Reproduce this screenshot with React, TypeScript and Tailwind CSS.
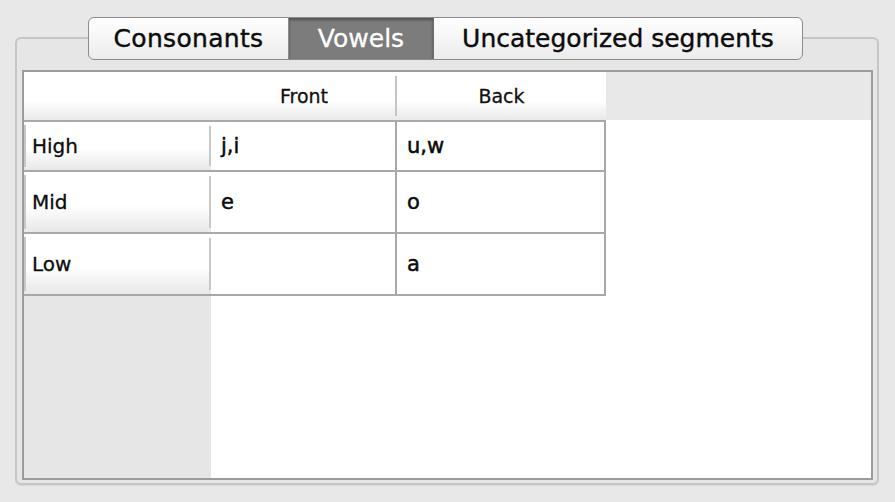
import React from "react";

const rows = [
  { label: "High", front: "j,i", back: "u,w", h: "h-[50px]" },
  { label: "Mid", front: "e", back: "o", h: "h-[62px]" },
  { label: "Low", front: "", back: "a", h: "h-[62px]" },
];

const font = { fontFamily: '"DejaVu Sans", "Liberation Sans", sans-serif' };

export default function App() {
  return (
    <div className="w-[895px] h-[502px] bg-[#e8e8e8] pt-[37px] pl-[15px]" style={font}>
      {/* tab panel */}
      <div className="relative w-[864px] h-[448px] border-2 border-[#c6c6c6] rounded-[6px] bg-[#e6e6e6] shadow-[0_1px_0_#d8d8d8] pt-[31px] px-[5px]">
        {/* segmented tabs */}
        <div className="absolute left-[71px] top-[-22px] flex h-[43px] rounded-[6px] border border-[#8c8c8c] overflow-hidden bg-gradient-to-b from-white to-[#ececec] text-[25px] text-[#0c0c0c] [-webkit-text-stroke:0.4px_#0c0c0c]">
          <div className="w-[200px] flex items-center justify-center border-r border-[#8c8c8c] tracking-[0.3px]">Consonants</div>
          <div className="w-[145px] flex items-center justify-center bg-[#7c7c7c] text-white [-webkit-text-stroke:0.3px_white] shadow-[inset_0_2px_3px_rgba(0,0,0,0.35)] border-r border-[#6a6a6a]">
            Vowels
          </div>
          <div className="w-[368px] flex items-center justify-center">Uncategorized segments</div>
        </div>

        {/* table view */}
        <div className="w-[851px] h-[410px] border-2 border-[#9c9c9c] bg-white flex flex-col">
          {/* column headers */}
          <div className="flex h-[48px] shrink-0">
            <div className="w-[582px] flex bg-gradient-to-b from-white from-60% to-[#e9e9e9] text-[19px] text-[#111] [-webkit-text-stroke:0.3px_#111]">
              <div className="w-[187px]" />
              <div className="w-[186px] flex items-center justify-center relative">
                Front
                <div className="absolute right-0 top-[4px] bottom-[4px] w-[2px] bg-[#c4c4c4]" />
              </div>
              <div className="w-[209px] flex items-center justify-center">Back</div>
            </div>
            <div className="flex-1 bg-[#e8e8e8]" />
          </div>

          {/* rows */}
          <div className="flex shrink-0">
            <div className="w-[582px] border-t-2 border-[#a8a8a8]">
              {rows.map((r) => (
                <div key={r.label} className={`flex ${r.h} border-b-2 border-[#a8a8a8]`}>
                  <div className="w-[187px] relative flex items-center pl-[8px] bg-gradient-to-b from-white from-55% to-[#e8e8e8] text-[20px] text-[#0c0c0c] [-webkit-text-stroke:0.3px_#0c0c0c]">
                    <div className="absolute left-0 top-[3px] bottom-[3px] w-[2px] bg-[#c8c8c8]" />
                    {r.label}
                    <div className="absolute right-0 top-[4px] bottom-[4px] w-[2px] bg-[#c8c8c8]" />
                  </div>
                  <div className="w-[186px] flex items-center pl-[10px] pt-[2px] text-[21px] text-[#0c0c0c] [-webkit-text-stroke:0.5px_#0c0c0c] border-r-2 border-[#a8a8a8]">
                    {r.front}
                  </div>
                  <div className="w-[209px] flex items-center pl-[10px] pt-[2px] text-[21px] text-[#0c0c0c] [-webkit-text-stroke:0.5px_#0c0c0c] border-r-2 border-[#a8a8a8]">
                    {r.back}
                  </div>
                </div>
              ))}
            </div>
            <div className="flex-1" />
          </div>

          {/* empty area */}
          <div className="flex flex-1">
            <div className="w-[187px] bg-[#e6e6e6]" />
            <div className="flex-1 bg-white" />
          </div>
        </div>
      </div>
    </div>
  );
}
